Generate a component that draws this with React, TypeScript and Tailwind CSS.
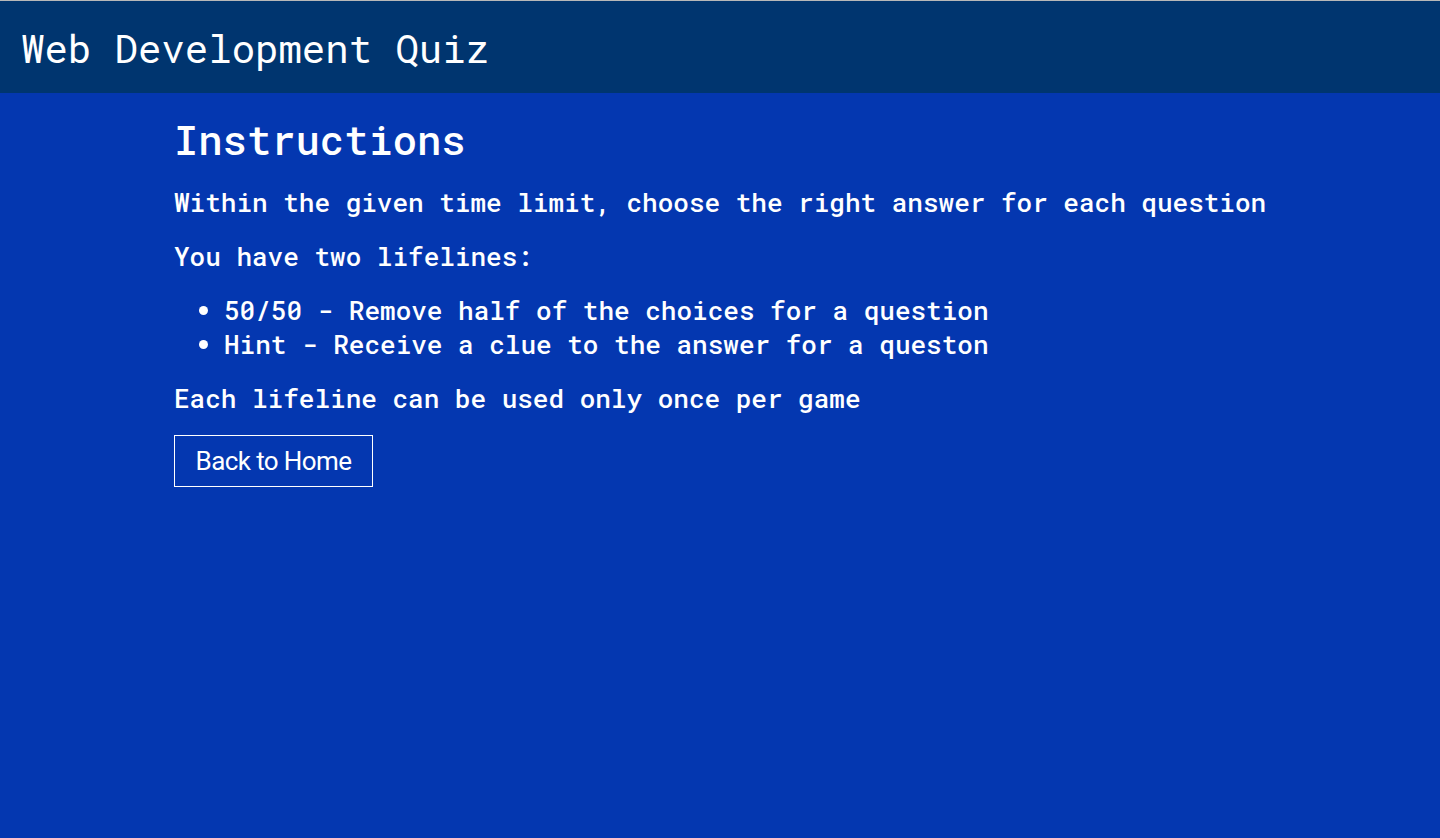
export default function App() {
  const mono = "font-['Roboto_Mono','DejaVu_Sans_Mono',monospace]";

  return (
    <div className={`min-h-[838px] bg-[#0437b0] text-white ${mono}`}>
      <header className="h-[93px] border-t border-[#b8b8b8] bg-[#00356f] px-[21px] pt-[23px]">
        <h1 className="text-[39px] leading-[48px] font-normal">Web Development Quiz</h1>
      </header>

      <main className="pl-[174px] pt-[23px]">
        <h2 className="text-[40.5px] leading-[48px] font-medium">Instructions</h2>
        <p className="mt-[21px] text-[26px] leading-[34px] font-medium">
          Within the given time limit, choose the right answer for each question
        </p>
        <p className="mt-[20px] text-[26px] leading-[34px] font-medium">You have two lifelines:</p>
        <ul className="mt-[20px] list-disc pl-[50px] text-[26px] leading-[34px] font-medium">
          <li>50/50 - Remove half of the choices for a question</li>
          <li>Hint - Receive a clue to the answer for a queston</li>
        </ul>
        <p className="mt-[20px] text-[26px] leading-[34px] font-medium">Each lifeline can be used only once per game</p>
        <button
          type="button"
          className="mt-[20px] flex h-[52px] w-[199px] items-center justify-center border border-white font-['Roboto','Liberation_Sans',sans-serif] text-[26px] tracking-[-0.6px] text-white"
        >
          Back to Home
        </button>
      </main>
    </div>
  );
}
